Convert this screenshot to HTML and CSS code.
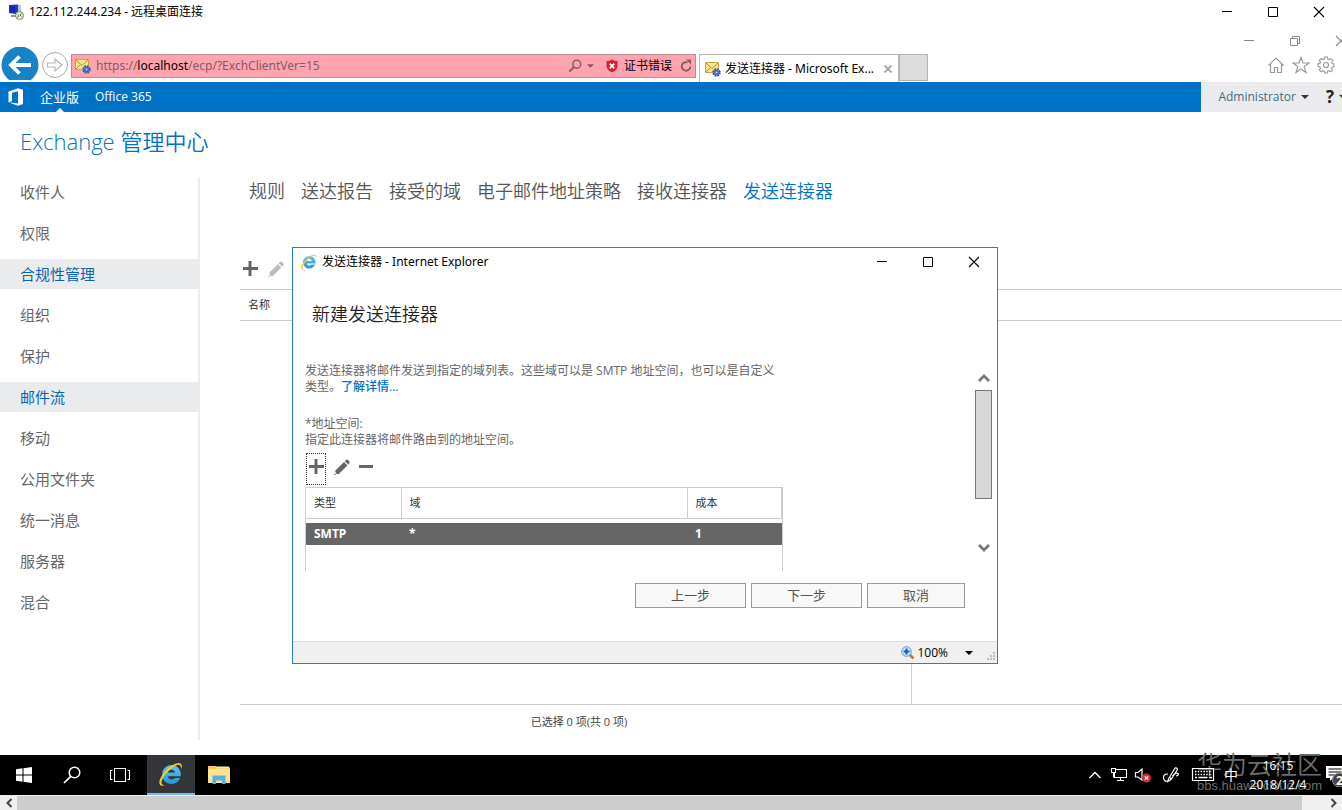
FILE: index.html
```html
<!DOCTYPE html>
<html lang="zh-CN">
<head>
<meta charset="utf-8">
<title>122.112.244.234 - 远程桌面连接</title>
<link rel="stylesheet" href="styles.css">
</head>
<body>
<svg class="defs" aria-hidden="true">
  <defs>
    <linearGradient id="ieBlue" x1="0" y1="0" x2="0" y2="1"><stop offset="0" stop-color="#5cc6f5"/><stop offset="1" stop-color="#2196dc"/></linearGradient>
    <symbol id="ie" viewBox="1 1 22 22">
      <path d="M12.4 3.700a8.600 8.600 0 0 0-8.600 8.700c0 4.900 3.800 8.700 8.600 8.700 3.700 0 6.700-2.100 8-5.500h-5.100c-.6.900-1.500 1.300-2.800 1.300-1.800 0-3.100-1.100-3.300-2.900h11.700c.1-.5.1-1.100.1-1.600 0-4.900-3.800-8.700-8.600-8.700zM9.200 10.600c.3-1.600 1.600-2.600 3.300-2.600s3 1 3.200 2.600z" fill="url(#ieBlue)"/>
      <path d="M21.400 7.500c.8-2.300.7-4-.3-4.900C18.800.6 12.200 3.600 7 9.200c-5 5.300-6.900 11-4.900 12.900.9.900 2.500.8 4.500-.1-1.400.3-2.300.1-2.800-.5-1.500-1.600.6-6.600 5-11.300 4.500-4.800 9.400-7.700 11.300-6.300.8.600 1.200 1.700 1.300 3.600z" fill="#f7c928"/>
    </symbol>
    <symbol id="mail" viewBox="0 0 16 16">
      <path d="M.5 1.500h13v10H.5z" fill="#f9e58a" stroke="#c9a23c"/>
      <path d="M1 2l6 5.500L13 2M1 11l4.500-4.500" fill="none" stroke="#a88632" stroke-width=".9"/>
      <circle cx="11.500" cy="11.500" r="3.200" fill="#9cb4e6" stroke="#2b52a0" stroke-width="2" stroke-dasharray="1.700 .8"/>
      <circle cx="11.500" cy="11.500" r="2.600" fill="#3f67b8"/><circle cx="11.500" cy="11.500" r="1" fill="#c9d8f3"/>
    </symbol>
    <symbol id="pencil" viewBox="0 0 16 16"><path d="M1.200 11.800L10 3l3.400 3.400-8.800 8.800L1.800 14.600zM10.800 2.200l1.200-1.200q1-1 2 0l1.200 1.200q1 1 0 2L14.200 5.600zM.4 14.200L2 15.800 0 16z" fill="currentColor"/></symbol>
    <symbol id="plus" viewBox="0 0 16 16"><path d="M6.500 0h3v6H16v3H9.500v6h-3V9H1V6h5.500z" fill="currentColor"/></symbol>
    <symbol id="min" viewBox="0 0 12 12"><path d="M1 5.500h10" stroke="currentColor"/></symbol>
    <symbol id="max" viewBox="0 0 12 12"><path d="M1.500 1.500h9v9h-9z" fill="none" stroke="currentColor"/></symbol>
    <symbol id="close" viewBox="0 0 12 12"><path d="M1 1l10 10M11 1L1 11" fill="none" stroke="currentColor" stroke-width="1.100"/></symbol>
    <symbol id="caret" viewBox="0 0 8 4"><path d="M0 0h8L4 4z" fill="currentColor"/></symbol>
    <symbol id="lens" viewBox="0 0 16 16"><circle cx="10" cy="6" r="4.500" fill="none" stroke="currentColor" stroke-width="1.700"/><path d="M6.800 9.200L1.500 14.500" stroke="currentColor" stroke-width="2.200"/></symbol>
    <symbol id="chev" viewBox="0 0 12 8"><path d="M1 7l5-5 5 5" fill="none" stroke="currentColor" stroke-width="2.800"/></symbol>
  </defs>
</svg>

<header class="rdp-bar">
  <svg class="rdp-icon" viewBox="0 0 16 16" aria-hidden="true"><path d="M1 1l9-.5v10L1 9z" fill="#2438b0"/><path d="M2 2l5 0v6L2 7.500z" fill="#1223c8"/><path d="M10 .5l3 1v8l-3 1z" fill="#b9bfc9"/><path d="M3 11h5v2H3z" fill="#8e949c"/><circle cx="11.500" cy="11.500" r="4" fill="#e6eadf" stroke="#7f8b7b"/><path d="M9.500 10.500l1.500 1.500-1.500 1M13.500 9.500L12 11l1.500 1.500" stroke="#348a2b" fill="none"/></svg>
  <h1 class="rdp-title">122.112.244.234 - 远程桌面连接</h1>
  <div class="win-buttons">
    <button aria-label="最小化"><svg><use href="#min"/></svg></button>
    <button aria-label="最大化"><svg><use href="#max"/></svg></button>
    <button aria-label="关闭"><svg><use href="#close"/></svg></button>
  </div>
</header>

<div class="remote">
  <div class="win-buttons inner-buttons">
    <button aria-label="最小化"><svg><use href="#min"/></svg></button>
    <button aria-label="还原"><svg viewBox="0 0 12 12"><path d="M1.500 3.500h7v7h-7zM3.500 3.500v-2h7v7h-2" fill="none" stroke="currentColor"/></svg></button>
    <button aria-label="关闭"><svg><use href="#close"/></svg></button>
  </div>

  <div class="browser-bar">
    <button class="back" aria-label="后退"><svg viewBox="0 0 38 33"><circle cx="19" cy="18" r="18.500" fill="#1583c6"/><path d="M30 18H11M18.500 9.500L10 18l8.500 8.500" fill="none" stroke="#fff" stroke-width="3.800"/></svg></button>
    <button class="forward" aria-label="前进"><svg viewBox="0 0 28 28"><circle cx="14" cy="14" r="12.500" fill="#fff" stroke="#a9a9a9"/><path d="M6.500 12H14V8l7 6-7 6v-4H6.500z" fill="none" stroke="#b5b5b5" stroke-width="1.200"/></svg></button>
    <div class="address">
      <svg class="i16"><use href="#mail"/></svg>
      <a class="url" href="#">https://<b>localhost</b>/ecp/?ExchClientVer=15</a>
      <button aria-label="搜索"><svg class="i14"><use href="#lens"/></svg></button>
      <button class="drop" aria-label="下拉"><svg class="caret"><use href="#caret"/></svg></button>
      <svg class="i14 shield" viewBox="0 0 14 14"><path d="M7 0.500Q9.500 2.300 12.500 2.300V7Q12 11.500 7 13.500 2 11.500 1.500 7V2.300Q4.500 2.300 7 .5z" fill="#d2232e"/><path d="M4.700 4.700l4.600 4.600M9.300 4.700L4.700 9.300" stroke="#fff" stroke-width="1.700"/></svg>
      <span class="cert">证书错误</span>
      <button aria-label="刷新"><svg class="i14" viewBox="0 0 14 14"><path d="M11.300 7.500A4.300 4.300 0 1 1 8.500 3.400" fill="none" stroke="currentColor" stroke-width="1.800"/><path d="M7 .5h5v5z" fill="currentColor"/></svg></button>
    </div>
    <div class="page-tab"><svg class="i16"><use href="#mail"/></svg><span>发送连接器 - Microsoft Ex...</span><button aria-label="关闭标签页"><svg viewBox="0 0 10 10"><path d="M1.500 1.500l7 7M8.500 1.500l-7 7" stroke="#a8a8a8" stroke-width="1.800"/></svg></button></div>
    <button class="new-tab" aria-label="新建标签页"></button>
    <div class="tools">
      <button aria-label="主页"><svg viewBox="0 0 18 18"><path d="M1.500 9.500L9 2l7.500 7.500M3.500 8v8.500h4v-5h3v5h4V8" fill="none" stroke="#999" stroke-width="1.200"/></svg></button>
      <button aria-label="收藏夹"><svg viewBox="0 0 18 18"><path d="M9 1.500l2 5.500h6l-4.800 3.600 1.800 5.900L9 13l-5 3.500 1.800-5.900L1 7h6z" fill="none" stroke="#999" stroke-width="1.200"/></svg></button>
      <button aria-label="工具"><svg viewBox="0 0 18 18"><path d="M7.500 1h3l.4 2.100 1.300.6L14 2.500 15.800 4.500l-1.100 1.700.5 1.300L17 8v2.500l-1.900.4-.6 1.300 1.100 1.800-1.900 1.900-1.800-1.200-1.300.6L10.300 17H7.700l-.4-1.800-1.300-.5-1.800 1.200-1.900-1.900 1.200-1.800-.6-1.300L1 10.400V7.800l1.900-.4.600-1.300-1.200-1.700 1.900-1.900 1.700 1.200 1.300-.6z" fill="none" stroke="#999" stroke-width="1.100"/><circle cx="9" cy="9" r="2.500" fill="none" stroke="#999" stroke-width="1.200"/></svg></button>
    </div>
  </div>

  <nav class="suite-bar">
    <svg class="office" viewBox="0 0 16 18" aria-label="Office"><path d="M0.500 3.500L10 .2l5 1.500v14.400L10 17.700.5 14.300 10 15.500V3.300L4 4.800v8.100L.5 14.300z" fill="#fff"/></svg>
    <a class="current" href="#">企业版</a>
    <a href="#">Office 365</a>
    <div class="account">
      <button>Administrator <svg class="caret"><use href="#caret"/></svg></button>
      <button class="help" aria-label="帮助">?</button>
      <button aria-label="帮助菜单"><svg class="caret"><use href="#caret"/></svg></button>
    </div>
  </nav>

  <h2 class="product">Exchange 管理中心</h2>
  <div class="admin">
    <nav class="side">
      <a href="#">收件人</a><a href="#">权限</a><a class="on" href="#">合规性管理</a><a href="#">组织</a><a href="#">保护</a><a class="on" href="#">邮件流</a><a href="#">移动</a><a href="#">公用文件夹</a><a href="#">统一消息</a><a href="#">服务器</a><a href="#">混合</a>
    </nav>
    <main class="main">
      <nav class="tabs"><a href="#">规则</a><a href="#">送达报告</a><a href="#">接受的域</a><a href="#">电子邮件地址策略</a><a href="#">接收连接器</a><a class="on" href="#">发送连接器</a></nav>
      <div class="list-tools">
        <button aria-label="新建"><svg class="i16"><use href="#plus"/></svg></button>
        <button class="dim" aria-label="编辑"><svg class="i16"><use href="#pencil"/></svg></button>
      </div>
      <table class="list-head"><thead><tr><th>名称</th></tr></thead></table>
      <div class="list-body"><div class="list-pane"></div></div>
      <p class="count">已选择 0 项(共 0 项)</p>
    </main>
  </div>

  <section class="dialog" role="dialog" aria-labelledby="dlg-title">
    <header class="dialog-bar">
      <svg class="i16"><use href="#ie"/></svg>
      <span id="dlg-title">发送连接器 - Internet Explorer</span>
      <div class="win-buttons">
        <button aria-label="最小化"><svg><use href="#min"/></svg></button>
        <button aria-label="最大化"><svg><use href="#max"/></svg></button>
        <button aria-label="关闭"><svg><use href="#close"/></svg></button>
      </div>
    </header>
    <h3>新建发送连接器</h3>
    <div class="dialog-main">
      <div class="form">
        <p>发送连接器将邮件发送到指定的域列表。这些域可以是 SMTP 地址空间，也可以是自定义类型。<a href="#">了解详情...</a></p>
        <p class="field">*地址空间:<br>指定此连接器将邮件路由到的地址空间。</p>
        <div class="form-tools">
          <button class="focused" aria-label="添加"><svg class="i16"><use href="#plus"/></svg></button>
          <button aria-label="编辑"><svg class="i16"><use href="#pencil"/></svg></button>
          <button aria-label="删除"><svg class="i16" viewBox="0 0 16 16"><path d="M1 6h14v3H1z" fill="currentColor"/></svg></button>
        </div>
        <div class="grid">
          <table>
            <colgroup><col class="c-type"><col class="c-domain"><col class="c-cost"></colgroup>
            <thead><tr><th>类型</th><th>域</th><th>成本</th></tr></thead>
            <tbody><tr class="spacer"><td colspan="3"></td></tr><tr class="picked"><td>SMTP</td><td>*</td><td>1</td></tr></tbody>
          </table>
        </div>
      </div>
      <div class="vscroll">
        <button aria-label="向上滚动"><svg><use href="#chev"/></svg></button>
        <div class="thumb"></div>
        <button class="down" aria-label="向下滚动"><svg><use href="#chev"/></svg></button>
      </div>
    </div>
    <div class="actions"><button>上一步</button><button>下一步</button><button class="cancel">取消</button></div>
    <footer class="status">
      <svg class="i14" viewBox="0 0 14 14"><path d="M8.500 8.500l4 4" stroke="#c07a3a" stroke-width="2.600"/><circle cx="5.500" cy="5.500" r="4.800" fill="#cfe6f8" stroke="#5b9bd0"/><path d="M5.500 2.500v6M2.500 5.500h6" stroke="#1b5ea8" stroke-width="2"/></svg>
      <button>100%<svg class="caret"><use href="#caret"/></svg></button>
      <svg class="grip" viewBox="0 0 10 10"><path d="M7 0h2v2H7zM7 3h2v2H7zM4 3h2v2H4zM7 6h2v2H7zM4 6h2v2H4zM1 6h2v2H1z" fill="#bdbdbd"/></svg>
    </footer>
  </section>

  <footer class="taskbar">
    <button aria-label="开始"><svg viewBox="0 0 24 24"><path d="M4 6.200l6.500-.9v6.200H4zM11.500 5.200L20 4v7.500h-8.500zM4 12.500h6.500v6.200L4 17.800zM11.500 12.500H20V20l-8.500-1.200z" fill="#fff"/></svg></button>
    <button aria-label="搜索"><svg viewBox="0 0 24 24"><circle cx="14.500" cy="9.500" r="5.300" fill="none" stroke="#fff" stroke-width="1.500"/><path d="M10.700 13.300L4 20" stroke="#fff" stroke-width="1.700"/></svg></button>
    <button aria-label="任务视图"><svg viewBox="0 0 24 24"><path d="M6.500 5.500h11v13h-11zM4.500 7.500h-2v9h2M19.500 7.500h2v9h-2" fill="none" stroke="#fff" stroke-width="1.100"/></svg></button>
    <button class="active" aria-label="Internet Explorer"><svg><use href="#ie"/></svg></button>
    <button aria-label="文件资源管理器"><svg viewBox="0 0 24 24"><path d="M1 3h8l1.500 1.500H23V20H1z" fill="#f3cd62"/><path d="M1 6h22v14H1z" fill="#fde294"/><path d="M5.500 12.500h13V21h-3.500v-3.500H9V21H5.500z" fill="#4fb3e8"/><path d="M9 3.500h13v2H10.500z" fill="#ffe9a8"/></svg></button>
    <div class="tray">
      <svg class="t-chev" viewBox="0 0 14 8"><path d="M1.500 7L7 1.500 12.500 7" fill="none" stroke="#fff" stroke-width="1.300"/></svg>
      <svg viewBox="0 0 18 16"><path d="M5 2.500h11.500v8H4.500V6M10.500 10.500v3M7 13.500h7M1.500 1.500h4v4h-4zM3.500 5.500v5" fill="none" stroke="#fff" stroke-width="1.100"/></svg>
      <svg viewBox="0 0 18 16"><path d="M1.500 5.500H4l4-3.500v11L4 10H1.500z" fill="none" stroke="#fff" stroke-width="1.200"/><circle cx="12.500" cy="11" r="4.500" fill="#d8283c"/><path d="M10.800 9.300l3.400 3.400M14.200 9.300l-3.400 3.400" stroke="#fff" stroke-width="1.200"/></svg>
      <svg class="t-pen" viewBox="0 0 18 16"><path d="M6 7Q1 7 1.500 11T6 14q3 0 2.500-3.500M6.500 12L13 1q2-.5 2.500 1.500L9 12.500l-3 2zM10.500 9q3-4 5.500-2.500 1.500 1.500-2 2.500" fill="none" stroke="#fff" stroke-width="1.200"/></svg>
      <svg class="t-key" viewBox="0 0 24 16"><path d="M1.500 1.500h21v12h-21z" fill="none" stroke="#fff" stroke-width="1.200"/><path d="M4 4.500h17M4 7.500h17" stroke="#fff" stroke-width="1.500" stroke-dasharray="1.500 1.300"/><path d="M4 10.500h2M7.500 10.500h9M18 10.500h3" stroke="#fff" stroke-width="1.300"/></svg>
      <span class="ime">中</span>
      <time class="clock">16:15<br>2018/12/4</time>
      <svg class="t-note" viewBox="0 0 22 24"><path d="M1 3h18v12H8l-3 3v-3H1z" fill="#fff"/><path d="M3.500 6h13M3.500 9h13M3.500 12h9" stroke="#000" stroke-width="1.100"/><circle cx="14.500" cy="17" r="7" fill="#444" stroke="#999"/><text x="11" y="22" class="badge">2</text></svg>
    </div>
    <div class="watermark"><span>华为云社区</span><small>bbs.huaweicloud.com</small></div>
  </footer>
</div>

<div class="hscroll">
  <button aria-label="向左滚动"><svg viewBox="0 0 8 10"><path d="M6.500 1L2.500 5l4 4" fill="none" stroke="#444" stroke-width="2"/></svg></button>
  <div class="hthumb"></div>
  <button class="right" aria-label="向右滚动"><svg viewBox="0 0 8 10"><path d="M1.500 1l4 4-4 4" fill="none" stroke="#444" stroke-width="2"/></svg></button>
</div>
</body>
</html>
```
FILE: styles.css
```css
* { box-sizing: border-box; }
body {
  margin: 0;
  height: 100vh;
  display: flex;
  flex-direction: column;
  overflow: hidden;
  background: #fff;
  color: #000;
  font: 12px/16px "Open Sans", "Noto Sans CJK SC", sans-serif;
}
button {
  margin: 0;
  padding: 0;
  border: 0;
  background: none;
  color: inherit;
  font: inherit;
  display: flex;
  align-items: center;
  justify-content: center;
}
a { color: inherit; text-decoration: none; }
h1, h2, h3, p { margin: 0; font-weight: 400; }
svg { flex: none; display: block; }
.defs { position: absolute; width: 0; height: 0; }
.i16 { width: 16px; height: 16px; }
.i14 { width: 14px; height: 14px; }
.caret { width: 8px; height: 4px; }

/* Outer remote desktop window */
.rdp-bar { display: flex; align-items: center; height: 24px; padding-left: 8px; }
.rdp-icon { width: 16px; height: 16px; margin-right: 5px; }
.rdp-title { flex: 1; font-size: 12px; }
.rdp-title, .url, .page-tab, .dialog-bar { font-family: "Noto Sans", "Noto Sans CJK SC", sans-serif; }
.win-buttons { display: flex; margin-left: auto; }
.win-buttons button { width: 46px; height: 24px; }
.win-buttons svg { width: 12px; height: 12px; }
.remote { position: relative; flex: 1; min-height: 0; display: flex; flex-direction: column; overflow: hidden; }
.inner-buttons { height: 23px; margin-right: -22px; color: #888; align-items: center; padding-top: 10px; }

/* Browser chrome */
.browser-bar { display: flex; height: 35px; align-items: flex-start; }
.back { width: 38px; margin-left: 1px; }
.back svg { width: 38px; height: 33px; }
.forward { margin: 4px 2px 0; }
.forward svg { width: 28px; height: 28px; }
.address {
  display: flex;
  align-items: center;
  flex: 0 1 625px;
  height: 24px;
  margin-top: 7px;
  padding: 0 2px 0 3px;
  border: 1px solid #b98a90;
  background: #ffa3b1;
  color: #865a62;
}
.url { flex: 1; margin-left: 5px; }
.url b { font-weight: 400; color: #000; }
.drop { margin: 0 11px 0 5px; }
.drop .caret { width: 7px; }
.shield { margin-right: 5px; }
.cert { color: #000; margin-right: 7px; }
.page-tab {
  display: flex;
  align-items: center;
  flex: 0 1 200px;
  height: 28px;
  margin: 7px 0 0 3px;
  padding: 0 5px;
  border: 1px solid #b0b8b8;
  border-bottom: 0;
  white-space: nowrap;
}
.page-tab span { flex: 1; margin-left: 4px; }
.page-tab button svg { width: 10px; height: 10px; }
.new-tab { width: 29px; height: 27px; margin-top: 7px; background: #ddd; border: 1px solid #b4b4b4; }
.tools { display: flex; gap: 7px; margin: 9px 7px 0 auto; }
.tools svg { width: 18px; height: 18px; }

/* Suite navigation */
.suite-bar { display: flex; align-items: center; height: 30px; background: #0072c6; color: #fff; }
.office { width: 16px; height: 18px; margin: 0 16px 0 8px; }
.suite-bar > a { display: block; height: 30px; line-height: 30px; margin-right: 16px; }
.suite-bar > .current { position: relative; font-size: 13px; }
.current::after {
  content: "";
  position: absolute;
  left: 16px;
  bottom: 0;
  border: 4px solid transparent;
  border-top: 0;
  border-bottom-color: #fff;
}
.account {
  display: flex;
  align-items: center;
  align-self: stretch;
  margin: 0 -5px 0 auto;
  padding-left: 17px;
  background: #ebebee;
  color: #3f6b80;
}
.account .caret { margin-left: 5px; color: #333; }
.account .help { margin-left: 17px; color: #222; font-size: 17px; font-weight: 700; }

/* Exchange admin centre */
.product { height: 65px; padding: 14px 20px 0; font-size: 22px; line-height: 30px; font-weight: 350; color: #0072c6; }
.admin { flex: 1; display: flex; min-height: 0; }
.side {
  display: flex;
  flex-direction: column;
  gap: 11px;
  width: 200px;
  margin-bottom: 15px;
  border-right: 2px solid #ebecee;
  font-size: 15px;
  line-height: 30px;
  color: #666;
}
.side a { padding-left: 20px; }
.side .on { background: #e9ebed; color: #0b64ad; }
.main { flex: 1; display: flex; flex-direction: column; margin-left: 40px; }
.tabs { display: flex; gap: 16px; padding-left: 9px; font-size: 18px; line-height: 28px; font-weight: 350; color: #555; white-space: nowrap; }
.tabs .on { color: #0072c6; }
.list-tools { display: flex; gap: 10px; height: 84px; padding: 0 2px 12px; align-items: flex-end; color: #666; }
.list-tools .dim { color: #bbb; }
.list-head { width: 100%; border-collapse: collapse; }
.list-head th { height: 31px; padding: 0 8px; border: solid #ccc; border-width: 1px 0; font-size: 11px; font-weight: 400; text-align: left; color: #333; }
.list-body { flex: 1; display: flex; border-bottom: 1px solid #ccc; }
.list-pane { flex: 0 1 672px; border-right: 1px solid #ccc; }
.count { height: 50px; width: 678px; padding-top: 9px; font-size: 11px; text-align: center; color: #444; }

/* Connector window */
.dialog {
  position: absolute;
  left: 292px;
  top: 223px;
  width: 706px;
  display: flex;
  flex-direction: column;
  border: 1px solid #2c7fb8;
  background: #fff;
}
.dialog-bar { display: flex; align-items: center; height: 28px; padding-left: 8px; gap: 5px; }
.dialog h3 { padding: 25px 19px 0; font-size: 18px; line-height: 26px; font-weight: 350; color: #222; }
.dialog-main { display: flex; justify-content: space-between; height: 244px; padding: 36px 5px 0 12px; color: #666; }
.form { width: 478px; }
.form p { width: 474px; }
.form p a { color: #0072c6; font-weight: 500; }
.form .field { margin-top: 21px; }
.form-tools { display: flex; gap: 8px; align-items: center; margin: 5px 0 2px 1px; height: 32px; }
.form-tools button { height: 32px; align-items: flex-start; padding-top: 6px; }
.form-tools .focused { width: 20px; border: 1px dotted #333; padding-top: 5px; }
.grid { height: 84px; overflow: hidden; border: solid #ccc; border-width: 1px 1px 0; }
.grid table { width: 100%; border-collapse: collapse; table-layout: fixed; }
.c-type { width: 95px; }
.c-domain { width: 286px; }
.grid th, .grid td { padding: 0 8px; text-align: left; }
.grid th { height: 30px; border-bottom: 1px solid #ccc; border-right: 1px solid #ccc; font-size: 11px; font-weight: 400; color: #333; }
.grid .spacer td { height: 5px; padding: 0; }
.picked { background: #666; color: #fff; font-weight: 700; }
.grid .picked td { height: 22px; }
.vscroll { display: flex; flex-direction: column; align-items: center; width: 17px; height: 178px; margin-top: 11px; color: #777; }
.vscroll svg { width: 12px; height: 8px; }
.thumb { width: 17px; height: 109px; margin-top: 8px; background: #d8d8d8; border: 1px solid #777; }
.down { margin-top: auto; transform: rotate(180deg); }
.actions { display: flex; justify-content: flex-end; gap: 5px; height: 70px; padding: 12px 32px 0 0; }
.actions button { width: 111px; height: 25px; padding-bottom: 2px; border: 1px solid #999; background: #f8f8f8; color: #555; font-size: 13px; }
.actions .cancel { width: 98px; }
.status { display: flex; align-items: center; justify-content: flex-end; height: 22px; border-top: 1px solid #ddd; background: #f0f0f0; }
.status button { margin-left: 2px; }
.status .caret { margin-left: 17px; }
.grip { width: 10px; height: 10px; margin: 8px 1px 0 13px; }

/* Remote taskbar */
.taskbar { position: relative; display: flex; height: 40px; background: #000; color: #fff; }
.taskbar > button { width: 48px; }
.taskbar > button svg { width: 24px; height: 24px; }
.taskbar .active { background: #333539; border-bottom: 2px solid #76b9ed; margin-left: 3px; }
.tray { display: flex; align-items: center; margin: 0 -11px 0 auto; z-index: 1; }
.tray svg { width: 18px; height: 16px; margin-right: 6px; }
.tray .t-chev { width: 14px; height: 8px; margin-right: 8px; }
.tray .t-pen { margin: 0 11px 0 4px; }
.tray .t-key { width: 24px; margin-right: 9px; }
.ime { font-size: 14px; }
.clock { width: 78px; margin: 0 4px 0 1px; text-align: center; line-height: 19px; }
.tray .t-note { width: 22px; height: 24px; margin: 0 6px 0 4px; }
.badge { font-size: 12px; font-weight: 700; fill: #fff; }
.watermark { position: absolute; right: 20px; top: -6px; display: flex; flex-direction: column; color: #6d6d6d; font-size: 25px; line-height: 30px; font-weight: 350; }
.watermark small { font: 13px/14px "Liberation Sans", sans-serif; }

/* Outer horizontal scrollbar */
.hscroll { display: flex; height: 15px; border-top: 1px solid #eee; background: #f0f0f0; }
.hscroll button { width: 17px; }
.hscroll svg { width: 8px; height: 10px; }
.hthumb { flex: 1; margin-right: 23px; background: #cdcdcd; }
```
